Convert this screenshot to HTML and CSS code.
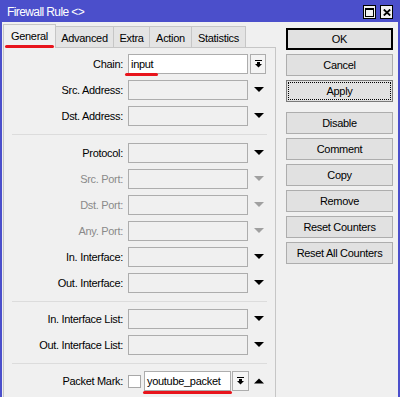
FILE: index.html
```html
<!DOCTYPE html>
<html>
<head>
<link rel="stylesheet" href="styles.css">
</head>
<body>
<div class="window">
    <div class="titlebar">
        <span class="title">Firewall Rule &lt;&gt;</span>
        <div class="controls">
            <span class="ctl"><svg width="9" height="9"><rect x="0.5" y="0.5" width="8" height="8" fill="none" stroke="#000"/><rect x="0" y="0" width="9" height="2" fill="#000"/></svg></span>
            <span class="ctl"><svg width="8" height="7"><path d="M0.8 0.5 L7.2 6.5 M7.2 0.5 L0.8 6.5" stroke="#000" stroke-width="1.8"/></svg></span>
        </div>
    </div>
    <div class="body">
        <div class="main">
            <div class="tabs">
                <div class="tab active marked">General</div>
                <div class="tab t-adv">Advanced</div>
                <div class="tab t-extra">Extra</div>
                <div class="tab t-action">Action</div>
                <div class="tab t-stats">Statistics</div>
            </div>
            <div class="panel">
                <div class="row">
                    <label>Chain:</label>
                    <div class="field white marked">input</div>
                    <span class="dd"><svg width="7" height="8"><rect x="0" y="0" width="7" height="1" fill="#000"/><rect x="2" y="2" width="3" height="2" fill="#000"/><polygon points="0,4 7,4 3.5,7.5" fill="#000"/></svg></span>
                </div>
                <div class="row">
                    <label>Src. Address:</label>
                    <div class="field"></div>
                    <span class="arrow"><svg width="10" height="6"><polygon points="0,0 10,0 5,5" fill="#000"/></svg></span>
                </div>
                <div class="row">
                    <label>Dst. Address:</label>
                    <div class="field"></div>
                    <span class="arrow"><svg width="10" height="6"><polygon points="0,0 10,0 5,5" fill="#000"/></svg></span>
                </div>
                <div class="sep first"></div>
                <div class="row">
                    <label>Protocol:</label>
                    <div class="field"></div>
                    <span class="arrow"><svg width="10" height="6"><polygon points="0,0 10,0 5,5" fill="#000"/></svg></span>
                </div>
                <div class="row off">
                    <label>Src. Port:</label>
                    <div class="field"></div>
                    <span class="arrow"><svg width="10" height="6"><polygon points="0,0 10,0 5,5" fill="#a0a0a0"/></svg></span>
                </div>
                <div class="row off">
                    <label>Dst. Port:</label>
                    <div class="field"></div>
                    <span class="arrow"><svg width="10" height="6"><polygon points="0,0 10,0 5,5" fill="#a0a0a0"/></svg></span>
                </div>
                <div class="row off">
                    <label>Any. Port:</label>
                    <div class="field"></div>
                    <span class="arrow"><svg width="10" height="6"><polygon points="0,0 10,0 5,5" fill="#a0a0a0"/></svg></span>
                </div>
                <div class="row">
                    <label>In. Interface:</label>
                    <div class="field"></div>
                    <span class="arrow"><svg width="10" height="6"><polygon points="0,0 10,0 5,5" fill="#000"/></svg></span>
                </div>
                <div class="row">
                    <label>Out. Interface:</label>
                    <div class="field"></div>
                    <span class="arrow"><svg width="10" height="6"><polygon points="0,0 10,0 5,5" fill="#000"/></svg></span>
                </div>
                <div class="sep"></div>
                <div class="row">
                    <label>In. Interface List:</label>
                    <div class="field"></div>
                    <span class="arrow"><svg width="10" height="6"><polygon points="0,0 10,0 5,5" fill="#000"/></svg></span>
                </div>
                <div class="row">
                    <label>Out. Interface List:</label>
                    <div class="field"></div>
                    <span class="arrow"><svg width="10" height="6"><polygon points="0,0 10,0 5,5" fill="#000"/></svg></span>
                </div>
                <div class="sep"></div>
                <div class="row">
                    <label>Packet Mark:</label>
                    <span class="check"></span>
                    <div class="field white short marked">youtube_packet</div>
                    <span class="dd small"><svg width="7" height="8"><rect x="0" y="0" width="7" height="1" fill="#000"/><rect x="2" y="2" width="3" height="2" fill="#000"/><polygon points="0,4 7,4 3.5,7.5" fill="#000"/></svg></span>
                    <span class="arrow up"><svg width="10" height="6"><polygon points="0,5.5 10,5.5 5,0.5" fill="#000"/></svg></span>
                </div>
            </div>
        </div>
        <div class="side">
            <div class="button default">OK</div>
            <div class="button">Cancel</div>
            <div class="button focus">Apply</div>
            <div class="button spaced">Disable</div>
            <div class="button">Comment</div>
            <div class="button">Copy</div>
            <div class="button">Remove</div>
            <div class="button">Reset Counters</div>
            <div class="button">Reset All Counters</div>
        </div>
    </div>
</div>
</body>
</html>
```

FILE: styles.css
```css
*
{
    box-sizing: border-box;
}

body
{
    margin: 0;
    font-family: "Liberation Sans", Arial, sans-serif;
    font-size: 11px;
    letter-spacing: -0.3px;
    color: #000;
}

.window
{
    width: 400px;
    height: 397px;
    background-color: #4b4fcb;
    display: flex;
    flex-direction: column;
    overflow: hidden;
}

.titlebar
{
    height: 22px;
    flex: none;
    display: flex;
    align-items: flex-start;
    padding: 0 7px;
    color: #fff;
}

.title
{
    flex: 1;
    font-size: 12px;
    letter-spacing: -0.6px;
    margin-top: 5px;
}

.controls
{
    display: flex;
    gap: 4px;
    margin-top: 5px;
}

.ctl
{
    width: 13px;
    height: 14px;
    background-color: #f0f0f0;
    border: 1px solid #000;
    display: flex;
    align-items: center;
    justify-content: center;
}

.body
{
    flex: 1;
    margin: 0 2px;
    background-color: #f0f0f0;
    display: flex;
}

.main
{
    width: 274px;
    flex: none;
    padding-left: 1px;
    display: flex;
    flex-direction: column;
}

.tabs
{
    height: 25px;
    flex: none;
    display: flex;
    align-items: flex-end;
}

.tab
{
    height: 21px;
    border: 1px solid #c6c6c6;
    border-bottom: none;
    background-color: #e4e4e4;
    display: flex;
    align-items: center;
    justify-content: center;
    margin-left: -1px;
    padding-top: 1px;
}

.tab.active
{
    width: 53px;
    height: 24px;
    margin-left: 0;
    margin-bottom: -1px;
    background-color: #f0f0f0;
    position: relative;
    z-index: 1;
    padding-top: 0;
    padding-bottom: 2px;
}

.t-adv { width: 59px; }
.t-extra { width: 37px; }
.t-action { width: 43px; }
.t-stats { width: 55px; }

.tab.marked::after
{
    content: "";
    position: absolute;
    left: 1px;
    bottom: 0;
    width: 49px;
    height: 3px;
    border-radius: 2px;
    background-color: #e8141c;
}

.panel
{
    flex: 1;
    border: 1px solid #c6c6c6;
    border-bottom: none;
    padding-top: 6px;
}

.row
{
    height: 20px;
    margin-bottom: 6px;
    display: flex;
    align-items: center;
}

.row label
{
    width: 119px;
    margin-right: 5px;
    text-align: right;
}

.row.off label
{
    color: #8a8a8a;
}

.field
{
    width: 120px;
    height: 20px;
    border: 1px solid #adadad;
    background-color: #f0f0f0;
    padding-left: 2px;
    line-height: 18px;
    position: relative;
}

.field.white
{
    background-color: #fff;
}

.field.short
{
    width: 87px;
    margin-left: 3px;
}

.field.marked::after
{
    content: "";
    position: absolute;
    left: -4px;
    bottom: -3px;
    width: 33px;
    height: 3px;
    border-radius: 2px;
    background-color: #e8141c;
}

.field.short.marked::after
{
    left: -2px;
    bottom: -4px;
    width: 89px;
}

.dd
{
    width: 16px;
    height: 20px;
    margin-left: 2px;
    border: 1px solid #adadad;
    background-color: #f4f4f4;
    display: flex;
    align-items: center;
    justify-content: center;
}

.dd.small
{
    width: 17px;
    margin-left: 1px;
}

.arrow
{
    width: 18px;
    margin-left: 2px;
    display: flex;
    justify-content: center;
}

.arrow.up
{
    width: 14px;
    margin-left: 3px;
}

.check
{
    width: 13px;
    height: 13px;
    border: 1px solid #a8a8a8;
    background-color: #fff;
}

/* margins collapse with the row above, so top = 8 */
.sep
{
    height: 1px;
    background-color: #dcdcdc;
    margin: 8px 8px 7px 8px;
}

.sep.first
{
    margin-bottom: 8px;
}

.side
{
    flex: 1;
    padding: 6px 0 0 10px;
    display: flex;
    flex-direction: column;
}

.button
{
    width: 107px;
    height: 22px;
    margin-bottom: 4px;
    border: 1px solid #adadad;
    background-color: #e1e1e1;
    display: flex;
    align-items: center;
    justify-content: center;
}

.button.default
{
    border-color: #000;
    box-shadow: inset 0 0 0 1px #000;
}

.button.focus
{
    border-color: #7a7a7a;
    outline: 1px dotted #000;
    outline-offset: -3px;
}

.button.spaced
{
    margin-top: 6px;
}
```
